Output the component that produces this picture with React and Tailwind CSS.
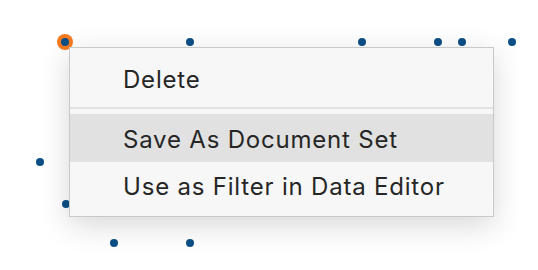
import React from 'react'

const dots = [
  [190, 42],
  [362, 42],
  [438, 42],
  [462, 42],
  [512, 42],
  [40, 162],
  [66, 204],
  [114, 243],
  [190, 243],
]

export default function App() {
  return (
    <div className="relative w-[538px] h-[270px] bg-white overflow-hidden" style={{ fontFamily: 'Inter, "Noto Sans", sans-serif' }}>
      {/* scatter points */}
      {dots.map(([x, y], i) => (
        <span
          key={i}
          className="absolute w-[8px] h-[8px] -ml-[4px] -mt-[4px] rounded-full bg-[#0b4f86]"
          style={{ left: x, top: y }}
        />
      ))}
      {/* selected point */}
      <span className="absolute left-[57px] top-[34px] w-[16px] h-[16px] rounded-full bg-[#f47a20] flex items-center justify-center">
        <span className="w-[8px] h-[8px] rounded-full bg-[#0b4f86]" />
      </span>

      {/* context menu */}
      <div className="absolute left-[69px] top-[47px] w-[425px] h-[170px] bg-[#f7f7f7] border border-[#c9c9c9] shadow-[0_8px_28px_rgba(0,0,0,0.16)] py-[6px] text-[24px] tracking-[0.8px] text-[#262626]">
        <div className="h-[48px] flex items-center pl-[53px] pt-[4px]">Delete</div>
        <div className="h-[12px] flex flex-col justify-center">
          <div className="h-[2px] bg-[#e1e1e1]" />
        </div>
        <div className="h-[48px] flex items-center pl-[53px] pt-[4px] bg-[#e1e1e1]">Save As Document Set</div>
        <div className="h-[48px] flex items-center pl-[53px] pt-[2px]">Use as Filter in Data Editor</div>
      </div>
    </div>
  )
}
